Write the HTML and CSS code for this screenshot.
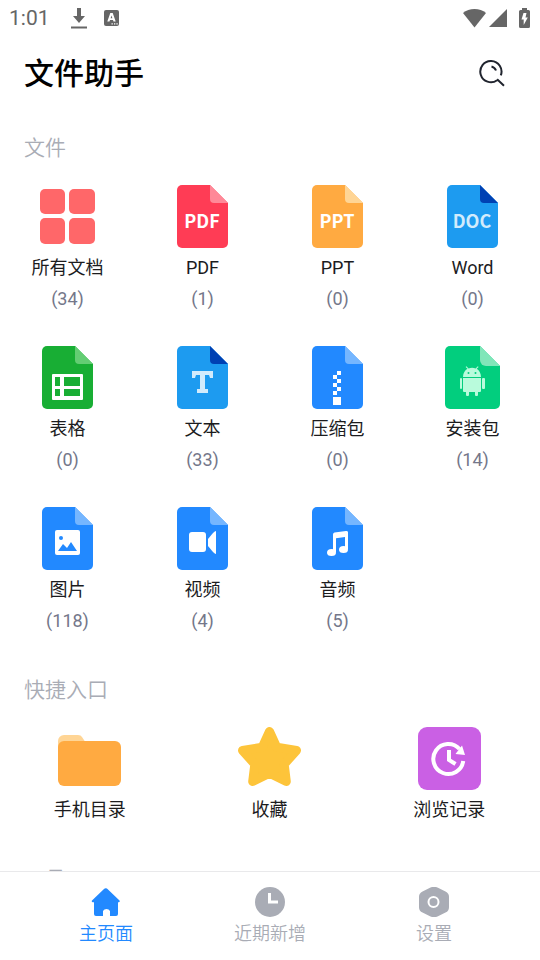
FILE: index.html
```html
<!DOCTYPE html>
<html lang="zh-CN">
<head>
<meta charset="utf-8">
<meta name="viewport" content="width=device-width, initial-scale=1">
<title>文件助手</title>
<link rel="stylesheet" href="styles.css">
</head>
<body>
<svg class="defs" aria-hidden="true">
  <symbol id="doc" viewBox="0 0 63 63">
    <path d="M11 0H39L57 18V58a5 5 0 0 1-5 5H11a5 5 0 0 1-5-5V5a5 5 0 0 1 5-5z"/>
  </symbol>
  <symbol id="fold" viewBox="0 0 63 63">
    <path d="M39 0L57 18H43a4 4 0 0 1-4-4z"/>
  </symbol>
</svg>
<div class="app">
  <div class="status">
    <span class="time">1:01</span>
    <svg class="download" width="16" height="21" viewBox="0 0 16 21"><path d="M6 0h4v8h4l-6 7-6-7h4zM0 18.500h16v2H0z"/></svg>
    <svg class="keyboard" width="15" height="16" viewBox="0 0 15 16"><rect width="15" height="16" rx="2"/><path class="cut" fill-rule="evenodd" d="M6.300 3h2.400l3 8.500H9.500L9 10H6l-.5 1.500H3.300zM7.500 5.600L6.600 8.300h1.800zM7.500 13.200h1.300v1.300H7.500zM10 13.200h1.300v1.300H10zM12.400 13.200h1.300v1.300h-1.300z"/></svg>
    <span class="signals">
      <svg width="23" height="19" viewBox="0 0 23 19"><path d="M0 4C6-1.200 17-1.200 23 4L11.500 18.500z"/></svg>
      <svg width="18" height="18" viewBox="0 0 18 18"><path d="M18 0v18H0z"/></svg>
      <svg class="battery" width="11" height="20" viewBox="0 0 11 20"><path d="M3 0h5v2h1.500A1.500 1.500 0 0 1 11 3.500v15A1.500 1.500 0 0 1 9.500 20h-8A1.500 1.500 0 0 1 0 18.500v-15A1.500 1.500 0 0 1 1.500 2H3z"/><path class="cut" d="M4.500 5h3L6.500 9.500h2.300L4.700 17V11.500H2.500z"/></svg>
    </span>
  </div>
  <header class="header">
    <h1>文件助手</h1>
    <button class="search" aria-label="搜索">
      <svg width="28" height="28" viewBox="0 0 28 28"><path d="M19.100 20.200A10.600 10.600 0 1 1 22.800 15.400M19.100 19.300L26 25.700M13.500 6.500A6.500 6.500 0 0 1 18 10.500"/></svg>
    </button>
  </header>
  <main class="content">
    <h2>文件</h2>
    <div class="grid files">
      <button class="item"><svg class="icon" viewBox="0 0 63 63" fill="#ff6769"><rect x="4" y="4" width="25" height="25" rx="5"/><rect x="33" y="4" width="26" height="25" rx="5"/><rect x="4" y="33" width="25" height="26" rx="5"/><rect x="33" y="33" width="26" height="26" rx="5"/></svg><span class="label">所有文档</span><span class="count">(34)</span></button>
      <button class="item"><svg class="icon" viewBox="0 0 63 63"><use href="#doc" fill="#ff3c55"/><use href="#fold" fill="#ff8998"/><text x="31" y="43" fill="#fff">PDF</text></svg><span class="label">PDF</span><span class="count">(1)</span></button>
      <button class="item"><svg class="icon" viewBox="0 0 63 63"><use href="#doc" fill="#ffaa41"/><use href="#fold" fill="#ffd595"/><text x="31" y="43" fill="#fff">PPT</text></svg><span class="label">PPT</span><span class="count">(0)</span></button>
      <button class="item"><svg class="icon" viewBox="0 0 63 63"><use href="#doc" fill="#1d9bf0"/><use href="#fold" fill="#0041b3"/><text x="31" y="43" fill="#d2ebfc">DOC</text></svg><span class="label">Word</span><span class="count">(0)</span></button>

      <button class="item"><svg class="icon" viewBox="0 0 63 63"><use href="#doc" fill="#18ae34"/><use href="#fold" fill="#63cd73"/><path fill="#fff" fill-rule="evenodd" d="M17 28h29a1 1 0 0 1 1 1v24a1 1 0 0 1-1 1H17a1 1 0 0 1-1-1V29a1 1 0 0 1 1-1zM19 31v9h5v-9zM28 31v9h16v-9zM19 43v7h5v-7zM28 43v7h16v-7z"/></svg><span class="label">表格</span><span class="count">(0)</span></button>
      <button class="item"><svg class="icon" viewBox="0 0 63 63"><use href="#doc" fill="#1d9bf0"/><use href="#fold" fill="#0041b3"/><path fill="#d2ebfc" d="M21 25h21v7h-3l-1-3h-4v14h3v4H26v-4h3V29h-4l-1 3h-3z"/></svg><span class="label">文本</span><span class="count">(33)</span></button>
      <button class="item"><svg class="icon" viewBox="0 0 63 63"><use href="#doc" fill="#2289ff"/><use href="#fold" fill="#75b6ff"/><path fill="#fff" d="M31 25h4v4h-4zM27 29h4v4h-4zM31 33h4v4h-4zM27 37h4v4h-4zM31 41h4v4h-4zM27 45h4v4h-4zM27 51h8v8h-8z"/></svg><span class="label">压缩包</span><span class="count">(0)</span></button>
      <button class="item"><svg class="icon" viewBox="0 0 63 63"><path fill="#02ce7e" d="M9 0H39L59 20V58a5 5 0 0 1-5 5H9a5 5 0 0 1-5-5V5a5 5 0 0 1 5-5z"/><path fill="#80e6b9" d="M39 0L59 20H45a6 6 0 0 1-6-6z"/><g fill="#b9fbdc"><path fill-rule="evenodd" d="M22 31c0-4 2-6.800 4.500-8.200L24.600 20.900l.8-.6 2.200 2.100c2.200-.9 4.800-.9 7 0l2.200-2.100.8.600-1.900 1.900C38 24.200 40 27 40 31zM26.500 27a1 1 0 1 0 2 0 1 1 0 1 0-2 0M33.500 27a1 1 0 1 0 2 0 1 1 0 1 0-2 0"/><path d="M22 32h18v13a1 1 0 0 1-1 1h-2v3a1 1 0 0 1-1 1h-1a1 1 0 0 1-1-1v-3h-6v3a1 1 0 0 1-1 1h-1a1 1 0 0 1-1-1v-3h-2a1 1 0 0 1-1-1z"/><rect x="19" y="32" width="2" height="11" rx="1"/><rect x="41" y="32" width="3" height="11" rx="1"/></g></svg><span class="label">安装包</span><span class="count">(14)</span></button>

      <button class="item"><svg class="icon" viewBox="0 0 63 63"><use href="#doc" fill="#2289ff"/><use href="#fold" fill="#75b6ff"/><rect x="19" y="23" width="25" height="25" rx="2" fill="#fff"/><circle cx="25" cy="31" r="2" fill="#2289ff"/><path fill="#2289ff" d="M22 44l5-7 4 4 4-6 6 9z"/></svg><span class="label">图片</span><span class="count">(118)</span></button>
      <button class="item"><svg class="icon" viewBox="0 0 63 63"><use href="#doc" fill="#2289ff"/><use href="#fold" fill="#75b6ff"/><g fill="#fff"><rect x="18" y="25" width="17" height="20" rx="3"/><path d="M37 32l5-6q2-2 3-2v23q-1 0-3-2l-5-6z"/></g></svg><span class="label">视频</span><span class="count">(4)</span></button>
      <button class="item"><svg class="icon" viewBox="0 0 63 63"><use href="#doc" fill="#2289ff"/><use href="#fold" fill="#75b6ff"/><g fill="#fff"><path d="M27 27.500a2 2 0 0 1 1.500-2l11.500-1.500a1.500 1.500 0 0 1 2 1.500V42h-3V30l-9 1.200V45h-3z"/><ellipse cx="25.500" cy="45.500" rx="4.500" ry="3.500"/><ellipse cx="37.500" cy="42.500" rx="4.500" ry="3.500"/></g></svg><span class="label">音频</span><span class="count">(5)</span></button>
    </div>
    <h2>快捷入口</h2>
    <div class="grid quick">
      <button class="item"><svg class="icon" viewBox="0 0 63 63"><path fill="#ffd595" d="M0 20v-6a6 6 0 0 1 6-6h14q3 0 4 2l4 6v4z"/><rect y="14" width="63" height="45" rx="6" fill="#ffaa41"/></svg><span class="label">手机目录</span></button>
      <button class="item"><svg class="icon" viewBox="0 0 63 63"><path fill="#fdc43a" stroke="#fdc43a" stroke-width="9" stroke-linejoin="round" d="M31.500 4.500L38.800 20.300L58.500 23.400L46.200 37.200L48.300 54.500L31.500 46.300L14.700 54.500L16.800 37.200L4.500 23.400L24.200 20.300z"/></svg><span class="label">收藏</span></button>
      <button class="item"><svg class="icon" viewBox="0 0 63 63"><rect width="63" height="63" rx="9" fill="#ca60e4"/><g fill="none" stroke="#fff"><path stroke-width="4" d="M45.200 34A15 15 0 1 1 41.500 22"/><path stroke-width="4" d="M31 23v10l6.500 4"/></g><path fill="#fff" d="M44 18.500l3 9.500-9.500-1z"/></svg><span class="label">浏览记录</span></button>
    </div>
    <h2>工具</h2>
  </main>
  <nav class="tabs">
    <a class="tab active" href="#home"><svg viewBox="0 0 30 30"><path d="M15 1.200a2 2 0 0 1 1.500.7l12 11.600a1 1 0 0 1-.7 1.700H27V27a2 2 0 0 1-2 2h-6v-5a4 4 0 0 0-7 0v5H5a2 2 0 0 1-2-2V15.200H1.700a1 1 0 0 1-.7-1.700l12-11.600a2.500 2.500 0 0 1 2-.7z"/></svg><span>主页面</span></a>
    <a class="tab" href="#recent"><svg viewBox="0 0 30 30"><circle cx="15" cy="15" r="15"/><path class="line" d="M14.500 6v9H23"/></svg><span>近期新增</span></a>
    <a class="tab" href="#settings"><svg viewBox="0 0 30 30"><path d="M11 .8a9 9 0 0 1 8 0l7.500 3.700A6 6 0 0 1 30 10v10a6 6 0 0 1-3.500 5.500L19 29.200a9 9 0 0 1-8 0l-7.500-3.700A6 6 0 0 1 0 20V10a6 6 0 0 1 3.500-5.500z"/><circle class="line" cx="14.500" cy="15" r="5"/></svg><span>设置</span></a>
  </nav>
</div>
</body>
</html>
```
FILE: styles.css
```css
* {
  box-sizing: border-box;
}

body {
  margin: 0;
  background: #fff;
  color: #1c1c1e;
  font-family: Roboto, "Noto Sans CJK SC", sans-serif;
  font-size: 18px;
  line-height: 24px;
}

button {
  padding: 0;
  border: 0;
  background: none;
  color: inherit;
  font: inherit;
}

svg {
  display: block;
}

.defs {
  display: none;
}

.app {
  display: flex;
  flex-direction: column;
  height: 100vh;
}

.status {
  display: flex;
  align-items: center;
  height: 36px;
  padding: 0 10px 0 9px;
  color: #666;
  fill: #666;
}

.time {
  font-size: 21px;
}

.download {
  margin-left: 21px;
}

.keyboard {
  margin-left: 17px;
}

.cut {
  fill: #fff;
}

.signals {
  display: flex;
  align-items: center;
  gap: 3px;
  margin-left: auto;
}

.battery {
  margin-left: 9px;
}

.header {
  display: flex;
  align-items: center;
  justify-content: space-between;
  height: 72px;
  padding: 3px 34px 0 24px;
}

h1 {
  margin: 0;
  color: #000;
  font-size: 30px;
  font-weight: 500;
  line-height: 40px;
}

.search svg {
  fill: none;
  stroke: #20242e;
  stroke-width: 2;
}

.content {
  flex: 1;
  min-height: 0;
  overflow: hidden;
  padding-top: 23px;
}

h2 {
  margin: 0 24px 20px;
  color: #a9acb5;
  font-size: 21px;
  font-weight: 350;
  line-height: 34px;
}

.grid {
  display: grid;
  row-gap: 35px;
  margin-bottom: 40px;
}

.files {
  grid-template-columns: repeat(4, 1fr);
}

.quick {
  grid-template-columns: repeat(3, 1fr);
  padding-right: 1px;
}

.item {
  display: flex;
  flex-direction: column;
  align-items: center;
}

.icon {
  width: 63px;
  height: 63px;
}

.icon text {
  font-family: "Noto Sans CJK SC", sans-serif;
  font-size: 18px;
  font-weight: 700;
  text-anchor: middle;
}

.label {
  margin-top: 8px;
}

.count {
  margin-top: 7px;
  color: #74778a;
}

.tabs {
  display: flex;
  padding: 15px 24px 14px;
  border-top: 1px solid #e9e9eb;
}

.tab {
  display: flex;
  flex: 1;
  flex-direction: column;
  align-items: center;
  gap: 5px;
  color: #a9acb5;
  fill: #a9acb5;
  font-weight: 350;
  text-decoration: none;
}

.tab svg {
  width: 30px;
  height: 30px;
}

.active {
  color: #2289ff;
  fill: #2289ff;
}

.line {
  stroke: #fff;
  stroke-width: 2;
}

path.line {
  fill: none;
  stroke-width: 3;
}
```
